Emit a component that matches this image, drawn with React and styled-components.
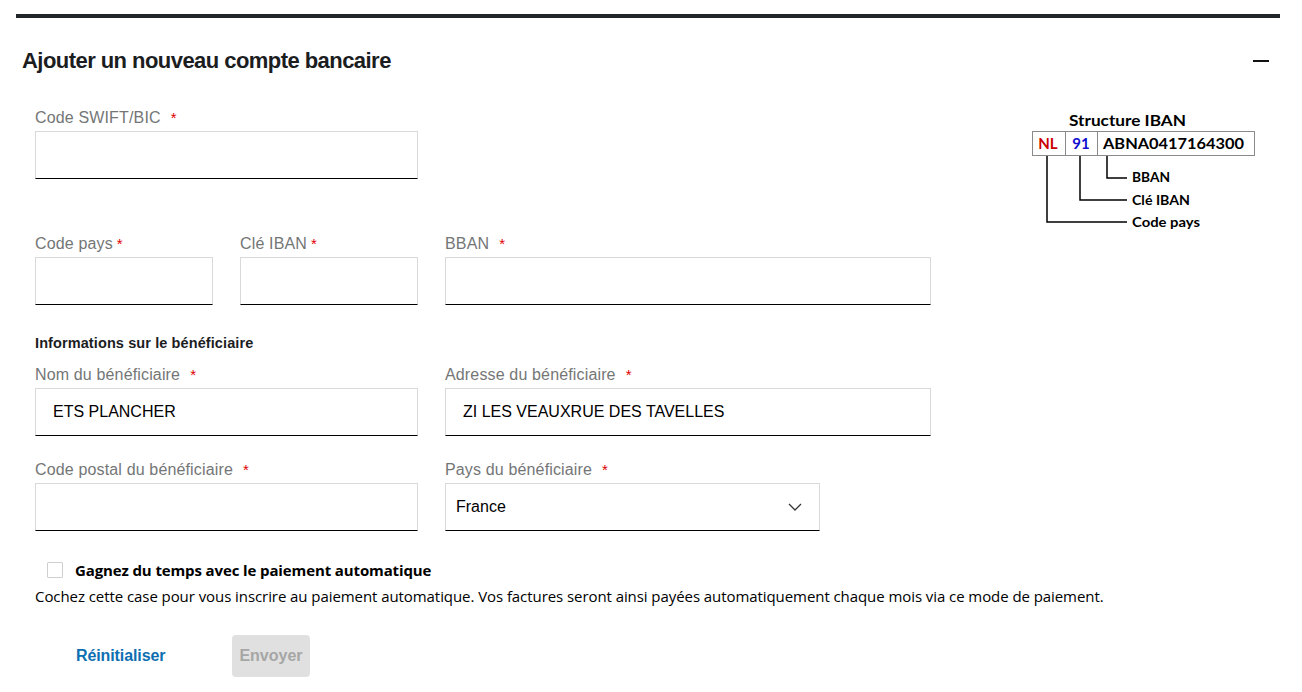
import React from "react";
import styled, { createGlobalStyle } from "styled-components";

const GlobalStyle = createGlobalStyle`
  html, body { margin: 0; padding: 0; background: #fff; }
  body { font-family: "Liberation Sans", Arial, sans-serif; color: #000; }
  * { box-sizing: border-box; }
`;

const Panel = styled.section`
  margin: 14px 22px 0 16px;
  border-top: 4px solid #222528;
`;

const HeaderRow = styled.div`
  display: flex;
  align-items: center;
  justify-content: space-between;
  margin-top: 28px;
  padding: 0 11px 0 6px;
`;

const Title = styled.h2`
  margin: 0;
  font-family: "Liberation Sans", Arial, sans-serif;
  font-weight: 700;
  font-size: 22px;
  line-height: 30px;
  letter-spacing: -0.55px;
  color: #1b1d1f;
`;

const Collapse = styled.button`
  width: 16px;
  height: 16px;
  padding: 0;
  border: 0;
  background: transparent;
  display: flex;
  align-items: center;
  cursor: pointer;
  &::before {
    content: "";
    display: block;
    width: 16px;
    height: 2px;
    background: #111;
  }
`;

const Body = styled.div`
  display: flex;
  justify-content: space-between;
  align-items: flex-start;
  margin-top: 31px;
  padding-left: 19px;
`;

const Form = styled.div`
  display: flex;
  flex-direction: column;
`;

const Row = styled.div`
  display: grid;
  grid-template-columns: ${(p) => p.$cols};
  column-gap: 27px;
  margin-top: ${(p) => p.$mt || 0}px;
  align-items: start;
`;

const Field = styled.div`
  display: flex;
  flex-direction: column;
  grid-column: ${(p) => p.$span || "auto"};
`;

const Label = styled.label`
  font-size: 16px;
  line-height: 20px;
  padding-top: 1px;
  color: #747676;
  margin-bottom: 3px;
  letter-spacing: 0.15px;
  white-space: nowrap;
`;

const Star = styled.span`
  color: #e00000;
  font-size: 15px;
  margin-left: ${(p) => (p.$tight ? 4 : 10)}px;
`;

const TextInput = styled.input`
  height: 48px;
  width: 100%;
  border: 1px solid #d8dada;
  border-bottom: 1px solid #000;
  border-radius: 0;
  padding: 0 12px 0 17px;
  font-family: "Liberation Sans", Arial, sans-serif;
  font-size: 16px;
  color: #000;
  background: #fff;
  outline: none;
`;

const SelectBox = styled.div`
  height: 48px;
  width: 100%;
  border: 1px solid #d8dada;
  border-bottom: 1px solid #000;
  padding: 0 17px 0 10px;
  display: flex;
  align-items: center;
  justify-content: space-between;
  font-size: 16px;
  color: #000;
  cursor: pointer;
`;

const SubHeading = styled.h3`
  margin: ${(p) => p.$mt}px 0 0;
  font-family: "Liberation Sans", Arial, sans-serif;
  font-weight: 700;
  font-size: 14.5px;
  line-height: 20px;
  letter-spacing: 0.1px;
  color: #1b1d1f;
`;

const Aside = styled.figure`
  margin: 3px 20px 0 0;
  width: 230px;
  flex: none;
`;

const AutoPay = styled.div`
  margin-top: 27px;
  padding-left: 19px;
  font-family: "Open Sans", "Noto Sans", sans-serif;
`;

const CheckRow = styled.label`
  display: flex;
  align-items: center;
  gap: 12px;
  padding-left: 12px;
  height: 24px;
  cursor: pointer;
`;

const Box = styled.span`
  width: 16px;
  height: 16px;
  border: 1px solid #cfcfcf;
  border-radius: 1px;
  background: #fff;
`;

const CheckText = styled.span`
  font-weight: 700;
  font-size: 15px;
  color: #000;
  letter-spacing: -0.12px;
`;

const Help = styled.p`
  margin: 3px 0 0;
  font-size: 15px;
  line-height: 22px;
  color: #000;
  letter-spacing: -0.07px;
`;

const Actions = styled.div`
  display: flex;
  align-items: center;
  gap: 67px;
  margin-top: 28px;
  padding-left: 60px;
`;

const ResetButton = styled.button`
  border: 0;
  background: none;
  padding: 0;
  font-family: "Liberation Sans", Arial, sans-serif;
  font-weight: 700;
  font-size: 16px;
  letter-spacing: -0.1px;
  color: #0d6fb2;
  cursor: pointer;
`;

const SubmitButton = styled.button`
  height: 42px;
  padding: 0 7px;
  border: 0;
  border-radius: 4px;
  background: #e0e0e0;
  color: #a6a6a6;
  font-family: "Liberation Sans", Arial, sans-serif;
  font-weight: 700;
  font-size: 16px;
`;

const Chevron = () => (
  <svg width="14" height="8" viewBox="0 0 14 8" fill="none">
    <polyline points="1,1 7,7 13,1" stroke="#333" strokeWidth="1.3" />
  </svg>
);

const IbanDiagram = () => (
  <svg width="230" height="120" viewBox="0 0 230 120" fontFamily="Lato, 'Open Sans', sans-serif" fontWeight="700">
    <text x="39" y="16" fontSize="15" fill="#000" textLength="117" lengthAdjust="spacingAndGlyphs">Structure IBAN</text>
    <rect x="2.5" y="21.5" width="222" height="24" fill="#fff" stroke="#8a8a8a" />
    <line x1="35.5" y1="21.5" x2="35.5" y2="45.5" stroke="#8a8a8a" />
    <line x1="67.5" y1="21.5" x2="67.5" y2="45.5" stroke="#8a8a8a" />
    <text x="18" y="39" fontSize="15" fill="#cc0000" textAnchor="middle">NL</text>
    <text x="51" y="39" fontSize="15" fill="#1010d0" textAnchor="middle">91</text>
    <text x="73" y="39" fontSize="15" fill="#000" textLength="141" lengthAdjust="spacingAndGlyphs">ABNA0417164300</text>
    <g stroke="#000" strokeWidth="1.5" fill="none">
      <polyline points="77,46 77,68 97,68" />
      <polyline points="50,46 50,90 97,90" />
      <polyline points="17,46 17,112 97,112" />
    </g>
    <text x="102" y="72" fontSize="13" fill="#000" textLength="38" lengthAdjust="spacingAndGlyphs">BBAN</text>
    <text x="102" y="95" fontSize="13" fill="#000" textLength="58" lengthAdjust="spacingAndGlyphs">Clé IBAN</text>
    <text x="102" y="117" fontSize="13" fill="#000" textLength="68" lengthAdjust="spacingAndGlyphs">Code pays</text>
  </svg>
);

const LabeledInput = ({ label, tight, value, span }) => (
  <Field $span={span}>
    <Label>
      {label}
      <Star $tight={tight}>*</Star>
    </Label>
    <TextInput defaultValue={value || ""} />
  </Field>
);

export default function App() {
  return (
    <>
      <GlobalStyle />
      <Panel>
        <HeaderRow>
          <Title>Ajouter un nouveau compte bancaire</Title>
          <Collapse aria-label="Réduire" />
        </HeaderRow>
        <Body>
          <Form>
            <Row $cols="383px">
              <LabeledInput label="Code SWIFT/BIC" />
            </Row>
            <Row $cols="178px 178px 486px" $mt={54}>
              <LabeledInput label="Code pays" tight />
              <LabeledInput label="Clé IBAN" tight />
              <LabeledInput label="BBAN" />
            </Row>
            <SubHeading $mt={28}>Informations sur le bénéficiaire</SubHeading>
            <Row $cols="383px 486px" $mt={11}>
              <LabeledInput label="Nom du bénéficiaire" value="ETS PLANCHER" />
              <LabeledInput label="Adresse du bénéficiaire" value="ZI LES VEAUXRUE DES TAVELLES" />
            </Row>
            <Row $cols="383px 375px" $mt={23}>
              <LabeledInput label="Code postal du bénéficiaire" />
              <Field>
                <Label>
                  Pays du bénéficiaire<Star>*</Star>
                </Label>
                <SelectBox role="combobox">
                  <span>France</span>
                  <Chevron />
                </SelectBox>
              </Field>
            </Row>
          </Form>
          <Aside>
            <IbanDiagram />
          </Aside>
        </Body>
        <AutoPay>
          <CheckRow>
            <Box />
            <CheckText>Gagnez du temps avec le paiement automatique</CheckText>
          </CheckRow>
          <Help>
            Cochez cette case pour vous inscrire au paiement automatique. Vos factures seront ainsi payées automatiquement chaque mois via ce mode de paiement.
          </Help>
        </AutoPay>
        <Actions>
          <ResetButton>Réinitialiser</ResetButton>
          <SubmitButton disabled>Envoyer</SubmitButton>
        </Actions>
      </Panel>
    </>
  );
}
